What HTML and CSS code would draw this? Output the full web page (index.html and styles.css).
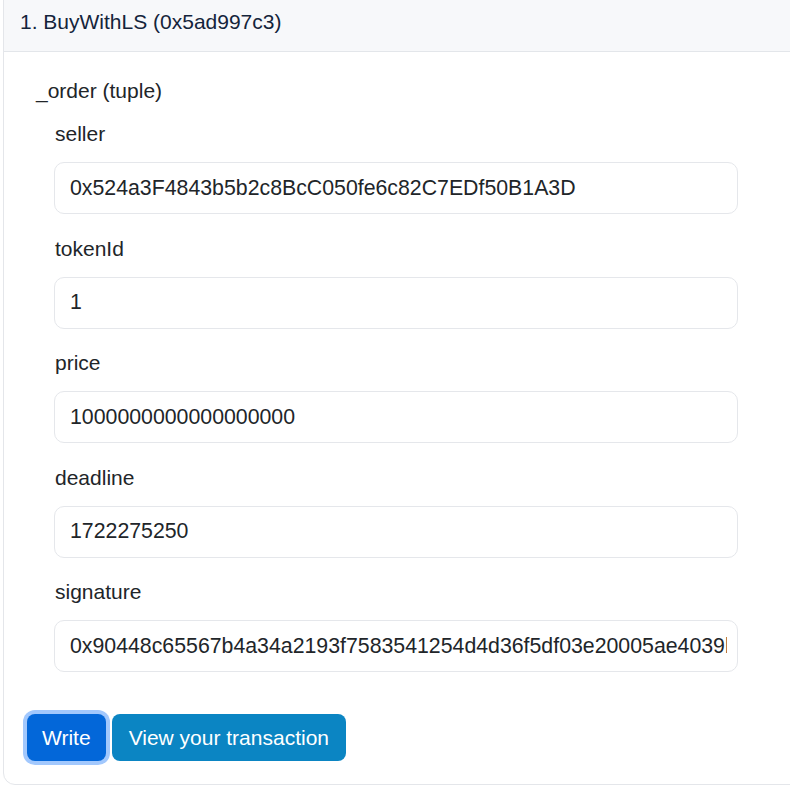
FILE: index.html
```html
<!DOCTYPE html>
<html>
<head>
<meta charset="utf-8">
<link rel="stylesheet" href="styles.css">
</head>
<body>
<div class="card">
  <div class="card-header">1. BuyWithLS (0x5ad997c3)</div>
  <div class="card-body">
    <div class="tuple-label">_order (tuple)</div>
    <div class="fields">
      <div class="field">
        <label class="field-label">seller</label>
        <input class="field-input" type="text" readonly value="0x524a3F4843b5b2c8BcC050fe6c82C7EDf50B1A3D">
      </div>
      <div class="field">
        <label class="field-label">tokenId</label>
        <input class="field-input" type="text" readonly value="1">
      </div>
      <div class="field">
        <label class="field-label">price</label>
        <input class="field-input" type="text" readonly value="1000000000000000000">
      </div>
      <div class="field">
        <label class="field-label">deadline</label>
        <input class="field-input" type="text" readonly value="1722275250">
      </div>
      <div class="field">
        <label class="field-label">signature</label>
        <input class="field-input" type="text" readonly value="0x90448c65567b4a34a2193f7583541254d4d36f5df03e20005ae4039b8f0d1c2a">
      </div>
    </div>
    <div class="actions">
      <button class="btn btn-write">Write</button>
      <button class="btn btn-view">View your transaction</button>
    </div>
  </div>
</div>
</body>
</html>
```

FILE: styles.css
```css
html, body {
  margin: 0;
  padding: 0;
  background: #ffffff;
  overflow: hidden;
}

body {
  font-family: "Liberation Sans", Arial, Helvetica, sans-serif;
  font-size: 21px;
  line-height: 30px;
  color: #212529;
}

.card {
  margin: -12px 0 0 3px;
  width: 820px;
  border: 1px solid #e4e6ea;
  border-radius: 12px;
  overflow: hidden;
  background: #ffffff;
}

.card-header {
  background: #f7f8fa;
  padding: 18px 16px 14px;
  border-bottom: 1px solid #e3e6ea;
  color: #14243b;
}

.card-body {
  padding: 24px 0 23px 23px;
}

.tuple-label {
  margin-left: 9px;
}

.fields {
  margin: 13px 0 0 27px;
  display: flex;
  flex-direction: column;
  gap: 19.5px;
}

.field {
  display: flex;
  flex-direction: column;
  gap: 13px;
}

.field-label {
  padding-left: 1px;
}

.field-input {
  box-sizing: border-box;
  width: 684px;
  height: 52px;
  padding: 0 10px 0 15px;
  border: 1px solid #e5e7eb;
  border-radius: 10px;
  font-family: inherit;
  font-size: 21.3px;
  color: #212529;
  background: #ffffff;
  outline: none;
}

.actions {
  margin-top: 42px;
  display: flex;
  gap: 6px;
}

.btn {
  font-family: inherit;
  font-size: 21px;
  line-height: 30px;
  border: none;
  border-radius: 8px;
  color: #ffffff;
  cursor: pointer;
}

.btn-write {
  padding: 8.5px 15px;
  background: #0367d9;
  box-shadow: 0 0 0 4px #a2c8fd;
}

.btn-view {
  padding: 8.5px 17px;
  background: #0b85c3;
}
```
